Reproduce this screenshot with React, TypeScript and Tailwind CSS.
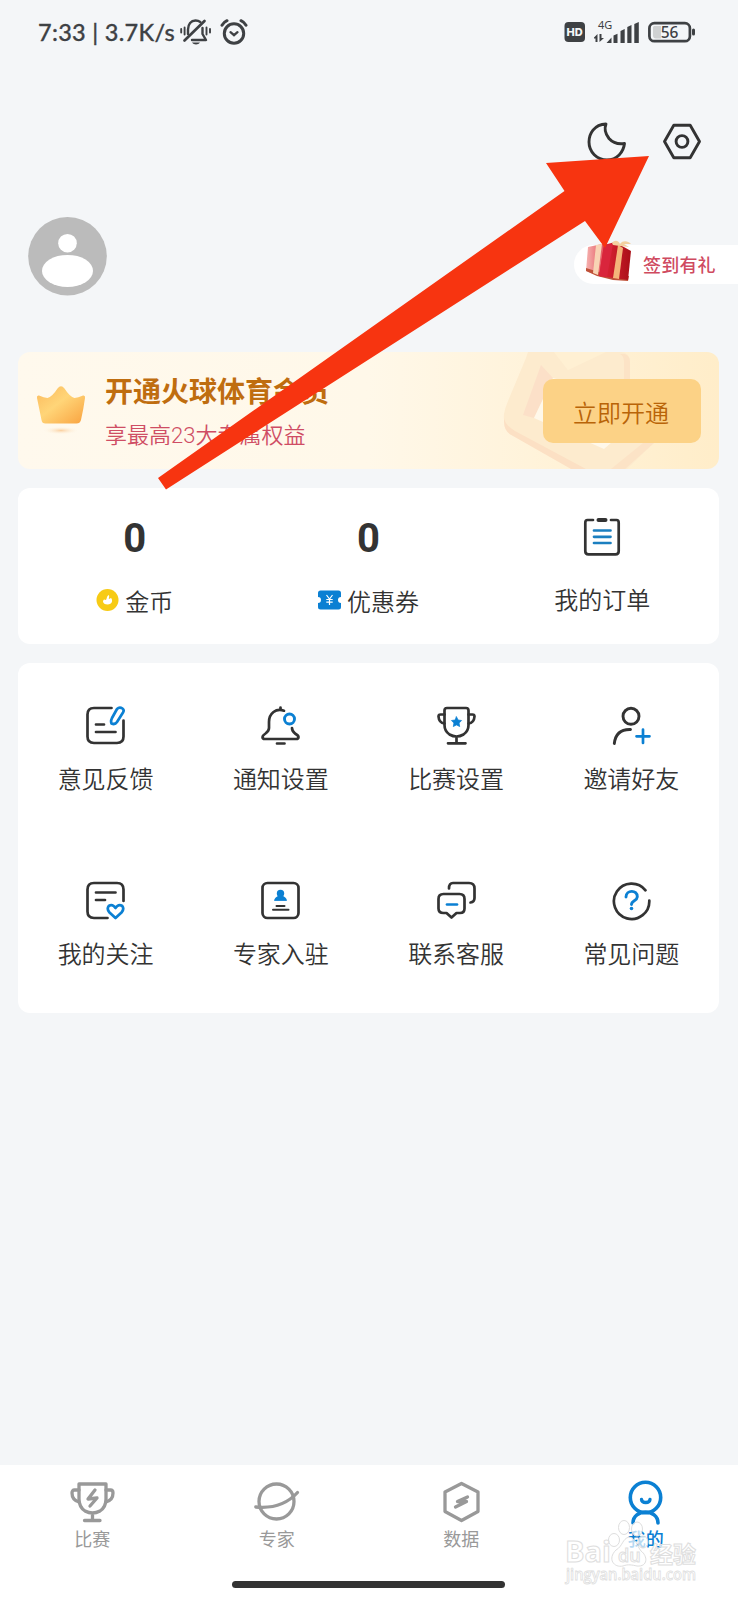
import React from 'react'

const ink = '#333333'
const blue = '#0b80d3'

const line = {
  fill: 'none',
  stroke: ink,
  strokeWidth: 2.7,
  strokeLinecap: 'round' as const,
  strokeLinejoin: 'round' as const
}

const StatusBar: React.FC = () => (
  <div className="flex h-16 items-center justify-between pl-[38px] pr-[42px] text-[#3e4144]">
    <div className="flex items-center">
      <span className="w-[142px] pt-[2px] whitespace-nowrap font-['Lato',sans-serif] text-[23.5px] leading-none font-medium tracking-[0.3px] [-webkit-text-stroke:0.3px_#3e4144]">
        7:33 | 3.7K/s
      </span>
      <svg className="h-[26px] w-[32px]" viewBox="0 0 32 26" fill="none" stroke="currentColor" strokeWidth="2.4" strokeLinecap="round">
        <path d="M8 15V10.500C8 5 11 1.500 15.500 1.500C17.500 1.500 19 2 20.300 3" />
        <path d="M22.500 9V15L26 21H12" strokeLinejoin="round" />
        <path d="M4.500 21.500L24.500 2" strokeWidth="2.700" />
        <path d="M12 23.500H20C18.500 26 13.500 26 12 23.500Z" fill="currentColor" stroke="none" />
        <path d="M1.200 10V13.500M4.600 8.500V15.500M26.500 8.500V15.500M30 10V13.500" strokeWidth="1.900" />
      </svg>
      <svg className="ml-2 h-[26px] w-[28px]" viewBox="0 0 28 26" fill="none" stroke="currentColor" strokeWidth="3" strokeLinecap="round">
        <circle cx="14" cy="14.500" r="9.700" />
        <path d="M2 6.200C3.200 4.200 5 2.600 7 1.700M26 6.200C24.800 4.200 23 2.600 21 1.700" />
        <path d="M10.500 13.200L14 16.200L17.500 13.200" strokeWidth="2.300" />
      </svg>
    </div>
    <div className="flex items-center">
      <svg className="h-[32px] w-[76px]" viewBox="0 -4 76 32" fill="currentColor">
        <rect x="0.500" y="2" width="20.500" height="20" rx="4" />
        <text x="10.700" y="16" textAnchor="middle" fontSize="11" fontWeight="800" fill="#f4f6f8" className="font-['Inter',sans-serif]">HD</text>
        <text x="34" y="9" fontSize="11" className="font-['Noto_Sans',sans-serif]">4G</text>
        <path d="M30 17.500L33.500 14V22H31.500V18.500H30ZM35.500 14H37.500V18H40L35.500 22Z" />
        <path d="M47.500 17.500V23H42.500ZM49.500 15.500L53.500 13.800V23H49.500ZM56.500 11L60.700 9V23H56.500ZM63.300 7L67.500 5V23H63.300ZM70.300 4L74.800 2V23H70.300Z" />
      </svg>
      <svg className="ml-2 h-[24px] w-[48px]" viewBox="0 0 48 24">
        <rect x="1.400" y="3.200" width="40.500" height="18" rx="5" fill="#f4f6f8" stroke="#3e4144" strokeWidth="2.700" />
        <path d="M6 6H13V18.500H8Q5 18.500 5 15.500V7Z" fill="#cfd1d2" />
        <text x="21.500" y="17.700" textAnchor="middle" fontSize="15.500" fontWeight="500" fill="#3e4144" className="font-['Noto_Sans',sans-serif]">56</text>
        <rect x="44" y="8.500" width="3" height="7" rx="1.500" fill="#3e4144" />
      </svg>
    </div>
  </div>
)

const Gift: React.FC = () => (
  <svg className="ml-[11px] h-[44px] w-[48px] -translate-y-1" viewBox="0 0 48 44">
    <defs>
      <linearGradient id="giftLeft" x1="0" x2="1">
        <stop offset="0" stopColor="#f6b3b0" />
        <stop offset="1" stopColor="#e0434f" />
      </linearGradient>
      <linearGradient id="giftRight" x1="0" x2="1">
        <stop offset="0" stopColor="#e5283c" />
        <stop offset="1" stopColor="#a90f17" />
      </linearGradient>
    </defs>
    <path d="M3 8L22 4L17 38L1 32Z" fill="url(#giftLeft)" />
    <path d="M1 29L17 34L44 37L43 42L28 41L12 37L1 32Z" fill="#bf5138" />
    <path d="M11 6L17 5L13 36L8 34Z" fill="#f8d3b4" />
    <path d="M19 6L30 3L46 12L43 41L14 37Z" fill="url(#giftRight)" />
    <path d="M19 6L28 5L22 38L14 37Z" fill="#d9253c" />
    <path d="M33 6L38 9L34 40L28 39Z" fill="#f4b57a" />
    <path d="M27 4C30 0 34 2 35 5C38 1 43 2 46 5L39 5L44 8L35 7L28 6Z" fill="#f3d0a0" />
  </svg>
)

const Crown: React.FC = () => (
  <svg className="-mt-px -ml-px h-[52px] w-[52px]" viewBox="0 0 52 52">
    <defs>
      <linearGradient id="crown" x1="0" y1="0" x2="1" y2="1">
        <stop offset="0" stopColor="#fbb95c" />
        <stop offset="0.450" stopColor="#ffd578" />
        <stop offset="1" stopColor="#f9a23f" />
      </linearGradient>
      <radialGradient id="crownShade">
        <stop offset="0" stopColor="#fbd0a0" />
        <stop offset="1" stopColor="#fef8ea" stopOpacity="0" />
      </radialGradient>
    </defs>
    <ellipse cx="26" cy="46.500" rx="18" ry="4" fill="url(#crownShade)" />
    <path
      d="M4 11.500Q9 13.500 12.500 14Q17 13 22.500 4.500Q26 0 29.500 4.500Q35 13 39.500 14Q43 13.500 48 11.500Q50.500 11 50 14Q48.500 25 46 36Q45 39.500 41.500 39.500H10.500Q7 39.500 6.500 36L2 14Q1.500 11 4 11.500Z"
      fill="url(#crown)"
    />
  </svg>
)

const VipBanner: React.FC = () => (
  <section className="relative mr-[19px] ml-[18px] mt-[56px] flex h-[117px] items-center overflow-hidden rounded-xl bg-linear-to-r from-[#fff9ed] via-[#fff8e9] to-[#ffedc9] pl-[18px] pr-[18px]">
    <svg className="absolute top-0 right-0 h-[117px] w-[240px]" viewBox="0 0 240 117">
      <path d="M75 0L89 18L127 0Z" fill="#fff0d3" />
      <path d="M49 0H75L89 18L127 0H141Q151 0 151 10V32L175 91L148 117H97L38 84Q23 76 25 62Q26 56 29 49L47 6Z" fill="#fdebce" />
      <path d="M25 66Q26 73 36 79L107 117H92L34 84Q25 80 25 70Z" fill="#fce0c4" />
      <path d="M146 2Q151 4 151 10V32H145V10Q145 4 141 2ZM175 91L146 117H132L164 91Z" fill="#fce3c6" />
      <path d="M62 13L74 26L55 66L44 63Z" fill="#fce0c8" />
      <path d="M74 26L55 66L125 97L133 90L150 60L89 30Z" fill="#fff8ea" />
    </svg>
    <Crown />
    <div className="ml-[18px] flex flex-1 flex-col pt-[5px]">
      <h2 className="text-[28px] leading-[38px] font-bold text-[#bf6d0f]">开通火球体育会员</h2>
      <p className="mt-[8px] text-[22px] leading-[32px] font-[350] text-[#cf4d64]">享最高23大专属权益</p>
    </div>
    <button className="relative flex h-[64px] w-[158px] items-center justify-center rounded-[10px] bg-[#fcd286] pt-[6px] pr-[2px] text-[24px] font-[350] text-[#b96408]">
      立即开通
    </button>
  </section>
)

const CoinIcon: React.FC = () => (
  <svg className="mb-[5px] h-[23px] w-[23px]" viewBox="0 0 23 23">
    <circle cx="11.500" cy="11" r="11" fill="#f7cb15" />
    <path d="M12.500 6C14 7 12.500 9 13 10L15 9C17 11 16.500 15.500 11.500 15.500C7 15.500 6 12 8 10.500L10 11C11 9.500 10.500 7.500 12.500 6Z" fill="#fff" />
  </svg>
)

const CouponIcon: React.FC = () => (
  <svg className="mb-[5px] h-[23px] w-[23px]" viewBox="0 0 23 23">
    <path d="M2.500 1.500H20.500Q23 1.500 23 4V8A3 3 0 0 0 23 14V18Q23 20.500 20.500 20.500H2.500Q0 20.500 0 18V14A3 3 0 0 0 0 8V4Q0 1.500 2.500 1.500Z" fill={blue} />
    <path d="M8.500 6L11.500 10L14.500 6M11.500 10V16M8.300 10.500H14.700M8.300 13.200H14.700" fill="none" stroke="#fff" strokeWidth="1.200" />
  </svg>
)

const OrderIcon: React.FC = () => (
  <svg className="h-[40px] w-[38px]" viewBox="0 0 38 40" {...line}>
    <path d="M10 3H4.500Q2.300 3 2.300 5.500V34.300Q2.300 37.400 5.500 37.400H32.500Q35.700 37.400 35.700 34.300V5.500Q35.700 3 33.500 3H28" />
    <path d="M15.500 3H22.500" strokeWidth="4" />
    <path d="M11 13.500H27.500M11 19.800H27.500M11 26H27.500" stroke="#1b7fc0" />
  </svg>
)

const menus = [
  {
    label: '意见反馈',
    icon: (
      <>
        <path d="M25.500 2H8Q1.500 2 1.500 8.500V30.500Q1.500 37 8 37H31Q37.500 37 37.500 30.500V14.500" />
        <path d="M10 18.500H18M10 26H29.500" />
        <path d="M31 3Q33.500 0.500 36.500 2.500Q38.500 4 37 6.500L31 16Q29 19 25.500 17.500Q24.500 15 26 12Z" stroke={blue} />
      </>
    )
  },
  {
    label: '通知设置',
    icon: (
      <>
        <path d="M23 4.700Q17 2.700 12.500 6Q8 9.500 8 16V22Q8 25 4.500 27.500Q1.500 29.500 1.500 31Q1.500 33 4 33H35Q37.500 33 37.500 31Q37.500 29.500 34 27.500Q31 25 31 22" />
        <path d="M19.500 1.500V3.500M16 37.500H23.500" />
        <circle cx="28.500" cy="13" r="5" stroke={blue} strokeWidth="2.900" />
      </>
    )
  },
  {
    label: '比赛设置',
    icon: (
      <>
        <path d="M10 2H29Q31.500 2 31.500 4.500V19Q31.500 25 26.500 28.500Q19.500 32.500 12.500 28.500Q7.500 25 7.500 19V4.500Q7.500 2 10 2ZM19.500 31V37M11 37.300H28.500" />
        <path d="M7.500 8.500H3.500Q1.500 8.500 1.500 10.500Q2 17 7.500 17.500M31.500 8.500H35.500Q37.500 8.500 37.500 10.500Q37 17 31.500 17.500" />
        <path d="M19.500 10.800L21.100 14L24.600 14.500L22.100 17L22.700 20.600L19.500 18.900L16.300 20.600L16.900 17L14.400 14.500L17.900 14Z" fill={blue} stroke={blue} strokeWidth="0.700" />
      </>
    )
  },
  {
    label: '邀请好友',
    icon: (
      <>
        <circle cx="19" cy="10.300" r="8" strokeWidth="2.900" />
        <path d="M18.500 23.500Q4 23 2.300 37.500" strokeWidth="2.900" />
        <path d="M31 23.500V37M24.500 30.300H37.500" stroke={blue} />
      </>
    )
  },
  {
    label: '我的关注',
    icon: (
      <>
        <path d="M21.500 37H8Q1.500 37 1.500 30.500V8.500Q1.500 2 8 2H31Q37.500 2 37.500 8.500V20" />
        <path d="M10 11.500H29.500M10 19H19" />
        <path d="M29.500 27Q26.500 22.500 22.700 25Q20.500 28 23.500 31.500L29.500 37L35.500 31.500Q38.500 28 36.300 25Q32.500 22.500 29.500 27Z" stroke={blue} />
      </>
    )
  },
  {
    label: '专家入驻',
    icon: (
      <>
        <rect x="1.500" y="2" width="36" height="35" rx="5" />
        <circle cx="19.500" cy="12.500" r="3.700" fill={blue} stroke="none" />
        <path d="M18 15H21Q25.500 16.500 25.500 19.500H13.500Q13.500 16.500 18 15Z" fill={blue} stroke={blue} strokeWidth="0.800" />
        <path d="M15.500 25H23.500M12 28.700H27.500" strokeWidth="2" />
      </>
    )
  },
  {
    label: '联系客服',
    icon: (
      <>
        <path d="M12 7.500Q12 2 16 2H32Q37.500 2 37.500 7.500V17Q37.500 21 33.500 21.500" />
        <path d="M6.500 13H22.500Q27.500 13 27.500 18V27.500Q27.500 32 23 32H19.500L14.500 36.500L9.500 32H6.500Q1.500 32 1.500 27.500V18Q1.500 13 6.500 13Z" />
        <path d="M10 23.500H20" stroke={blue} />
      </>
    )
  },
  {
    label: '常见问题',
    icon: (
      <>
        <path d="M33.500 9.300A17.700 17.700 0 1 0 37.300 19.500" />
        <path d="M14 16C14 8.500 25.500 8.500 25.300 15.800C25 20 19.500 19.500 19.500 23.500" stroke={blue} strokeWidth="2.900" />
        <circle cx="19.500" cy="27.500" r="1.800" fill={blue} stroke="none" />
      </>
    )
  }
]

const tabs = [
  {
    label: '比赛',
    active: false,
    icon: (
      <>
        <path d="M9 3H36V18Q36 26 30 30Q22.500 34 15 30Q9 26 9 18ZM22.500 33V39M14.500 39.500H30" />
        <path d="M9 9H4.500Q2 9 2 12Q2 19 9 21M36 9H40.500Q43 9 43 12Q43 19 36 21" />
        <path d="M25 9L18 18L27 17L20 25" />
      </>
    )
  },
  {
    label: '专家',
    active: false,
    icon: (
      <>
        <circle cx="22.500" cy="20.500" r="17.500" />
        <path d="M1.800 26Q28 28.500 43.500 11.500" />
      </>
    )
  },
  {
    label: '数据',
    active: false,
    icon: (
      <>
        <path d="M22.500 2.500L39 11V30.500L22.500 39.500L6 30.500V11Z" />
        <path d="M28.500 16L18.500 20.500H27.500L16.500 26" />
      </>
    )
  },
  {
    label: '我的',
    active: true,
    icon: (
      <>
        <circle cx="22.500" cy="16.500" r="15.200" strokeWidth="3.600" />
        <path d="M18.500 18.500C19 22.500 26.500 22.500 27 18.500" />
        <path d="M10 42C10 27.500 35 27.500 35 42" strokeWidth="3.600" />
      </>
    )
  }
]

const Watermark: React.FC = () => (
  <svg className="pointer-events-none absolute right-[34px] bottom-[12px] h-[72px] w-[144px] overflow-visible" viewBox="0 0 144 72" fill="#ffffff" fillOpacity="0.700" stroke="#dedede" strokeWidth="1">
    <ellipse cx="54" cy="24" rx="5.500" ry="6.500" />
    <ellipse cx="64" cy="11.500" rx="5.500" ry="7" />
    <ellipse cx="77" cy="13" rx="5.500" ry="7" />
    <ellipse cx="83" cy="26" rx="5" ry="6" />
    <path d="M69 21C62 23 63 30 56 34C47 43 54 52 63 50C68 48 72 49 77 50C88 51 88 40 81 35C77 30 76 22 69 21Z" />
    <text x="5" y="46" fontSize="29" fontWeight="700" className="font-['Open_Sans',sans-serif]" textLength="46" lengthAdjust="spacingAndGlyphs">Bai</text>
    <text x="58" y="46" fontSize="18" fontWeight="600" className="font-['Open_Sans',sans-serif]">du</text>
    <text x="90" y="47" fontSize="23" fontWeight="700">经验</text>
    <text x="6" y="64" fontSize="15.500" fontWeight="600" textLength="130" lengthAdjust="spacingAndGlyphs" strokeWidth="0.800" className="font-['Open_Sans',sans-serif]">jingyan.baidu.com</text>
  </svg>
)

const App: React.FC = () => {
  return (
    <div className="relative flex h-[1600px] w-[738px] flex-col overflow-hidden bg-[#f4f6f8] font-['Roboto','Noto_Sans_CJK_SC',sans-serif] text-[#333333]">
      <StatusBar />

      {/* Theme switch and settings */}
      <div className="mt-[56px] flex h-[44px] items-center justify-end gap-[34px] pr-[36px]">
        <svg className="h-[42px] w-[42px]" viewBox="0 0 42 42" {...line} strokeWidth="2.900">
          <path d="M20 3C8 3.500 3 13 3 21C3 31 11 39 21 39C31 39 37.500 31 38.500 22.500C32 23.500 27 22 23 17.500C19.500 13 18 8 20 3Z" />
        </svg>
        <svg className="h-[42px] w-[40px]" viewBox="0 0 40 42" {...line} strokeWidth="2.900">
          <path d="M11.800 4.200H28.200L37.500 20.500L28.200 36.800H11.800L2.500 20.500Z" />
          <circle cx="20" cy="20.500" r="5.900" />
        </svg>
      </div>

      {/* Profile */}
      <div className="mt-[52px] flex h-[80px] items-start justify-between pl-[28px]">
        <svg className="h-[80px] w-[80px]" viewBox="0 0 80 80">
          <circle cx="39.500" cy="40.200" r="39.300" fill="#bbbbbb" />
          <circle cx="39.500" cy="27.200" r="9.300" fill="#fff" />
          <ellipse cx="39.500" cy="54.900" rx="25.500" ry="16" fill="#fff" />
        </svg>
        <div className="mt-[29px] flex h-[39px] w-[164px] items-center rounded-l-full bg-white">
          <Gift />
          <span className="ml-[10px] pt-[2px] text-[18px] font-medium tracking-[0.2px] text-[#cf4a5f]">签到有礼</span>
        </div>
      </div>

      <VipBanner />

      <section className="mr-[19px] ml-[18px] mt-[19px] grid h-[156px] grid-cols-3 rounded-xl bg-white text-[24px] font-[350]">
        <div className="flex flex-col items-center pt-[27px]">
          <span className="text-[40px] leading-[48px] font-bold">0</span>
          <div className="mt-[22px] flex items-center gap-[6px] leading-[36px]">
            <CoinIcon />
            金币
          </div>
        </div>
        <div className="flex flex-col items-center pt-[27px]">
          <span className="text-[40px] leading-[48px] font-bold">0</span>
          <div className="mt-[22px] flex items-center gap-[6px] leading-[36px]">
            <CouponIcon />
            优惠券
          </div>
        </div>
        <div className="flex flex-col items-center pt-[29px]">
          <OrderIcon />
          <span className="mt-[26px] leading-[36px]">我的订单</span>
        </div>
      </section>

      <section className="mr-[19px] ml-[18px] mt-[19px] grid h-[350px] grid-cols-4 grid-rows-2 rounded-xl bg-white">
        {menus.map((menu) => (
          <div key={menu.label} className="flex flex-col items-center pt-[43px]">
            <svg className="h-[40px] w-[39px]" viewBox="0 0 39 40" {...line}>
              {menu.icon}
            </svg>
            <span className="mt-[16px] text-[24px] leading-[36px] font-[350]">{menu.label}</span>
          </div>
        ))}
      </section>

      {/* Bottom navigation */}
      <nav className="mt-auto flex h-[135px] flex-col items-center bg-white">
        <div className="grid w-full grid-cols-4">
          {tabs.map((tab) => (
            <div
              key={tab.label}
              className={`flex flex-col items-center pt-[16px] ${tab.active ? 'font-medium text-[#0b80d3]' : 'text-[#999999]'}`}
            >
              <svg className="h-[44px] w-[45px] overflow-visible" viewBox="0 0 45 44" fill="none" stroke="currentColor" strokeWidth="3.300" strokeLinecap="round" strokeLinejoin="round">
                {tab.icon}
              </svg>
              <span className="mt-px text-[18px] leading-[28px]">{tab.label}</span>
            </div>
          ))}
        </div>
        <div className="mt-[27px] mr-px h-[7px] w-[273px] rounded-full bg-[#333333]" />
      </nav>

      <Watermark />

      {/* Pointer to the settings button */}
      <svg className="pointer-events-none absolute top-0 left-0 h-[500px] w-[738px]" viewBox="0 0 738 500">
        <path d="M649 156L546 163L564.500 191L158 478L166 489.500L585 221L605 248Z" fill="#f73410" />
      </svg>
    </div>
  )
}

export default App
